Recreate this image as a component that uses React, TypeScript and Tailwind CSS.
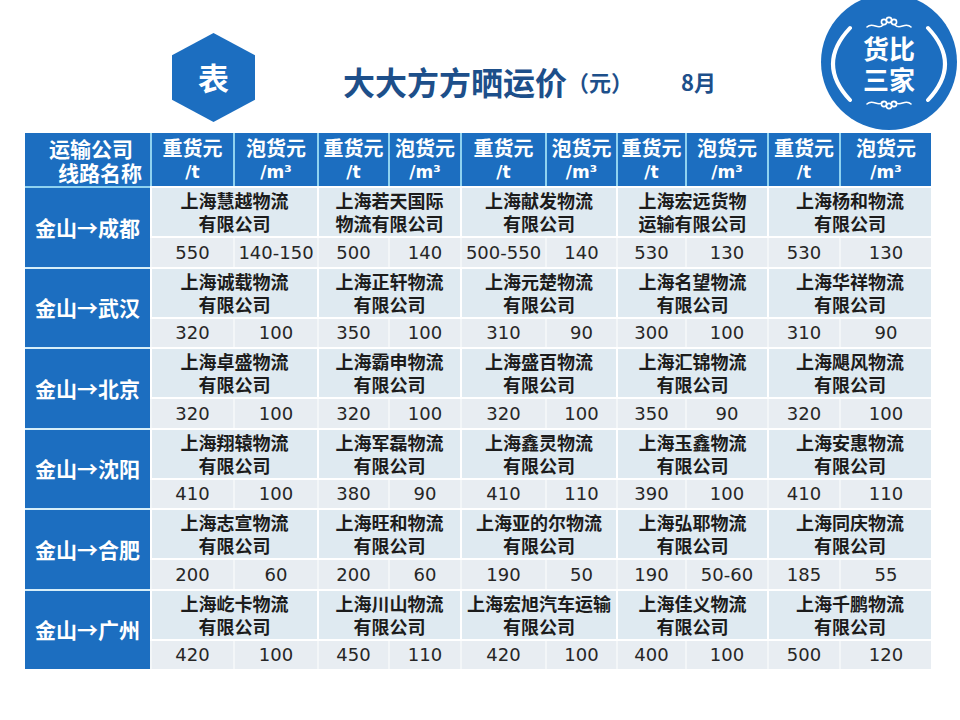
import React from "react";

const colWidths = [
  "w-[83px]",
  "w-[84px]",
  "w-[71px]",
  "w-[72px]",
  "w-[85px]",
  "w-[71px]",
  "w-[69px]",
  "w-[82px]",
  "w-[72px]",
  "w-[92px]",
];

const pairWidths = ["w-[167px]", "w-[143px]", "w-[156px]", "w-[151px]", "w-[164px]"];

const routes = [
  {
    name: "成都",
    companies: [
      ["上海慧越物流", "有限公司"],
      ["上海若天国际", "物流有限公司"],
      ["上海献发物流", "有限公司"],
      ["上海宏远货物", "运输有限公司"],
      ["上海杨和物流", "有限公司"],
    ],
    prices: ["550", "140-150", "500", "140", "500-550", "140", "530", "130", "530", "130"],
  },
  {
    name: "武汉",
    companies: [
      ["上海诚载物流", "有限公司"],
      ["上海正轩物流", "有限公司"],
      ["上海元楚物流", "有限公司"],
      ["上海名望物流", "有限公司"],
      ["上海华祥物流", "有限公司"],
    ],
    prices: ["320", "100", "350", "100", "310", "90", "300", "100", "310", "90"],
  },
  {
    name: "北京",
    companies: [
      ["上海卓盛物流", "有限公司"],
      ["上海霸申物流", "有限公司"],
      ["上海盛百物流", "有限公司"],
      ["上海汇锦物流", "有限公司"],
      ["上海飓风物流", "有限公司"],
    ],
    prices: ["320", "100", "320", "100", "320", "100", "350", "90", "320", "100"],
  },
  {
    name: "沈阳",
    companies: [
      ["上海翔辕物流", "有限公司"],
      ["上海军磊物流", "有限公司"],
      ["上海鑫灵物流", "有限公司"],
      ["上海玉鑫物流", "有限公司"],
      ["上海安惠物流", "有限公司"],
    ],
    prices: ["410", "100", "380", "90", "410", "110", "390", "100", "410", "110"],
  },
  {
    name: "合肥",
    companies: [
      ["上海志宣物流", "有限公司"],
      ["上海旺和物流", "有限公司"],
      ["上海亚的尔物流", "有限公司"],
      ["上海弘耶物流", "有限公司"],
      ["上海同庆物流", "有限公司"],
    ],
    prices: ["200", "60", "200", "60", "190", "50", "190", "50-60", "185", "55"],
  },
  {
    name: "广州",
    companies: [
      ["上海屹卡物流", "有限公司"],
      ["上海川山物流", "有限公司"],
      ["上海宏旭汽车运输", "有限公司"],
      ["上海佳义物流", "有限公司"],
      ["上海千鹏物流", "有限公司"],
    ],
    prices: ["420", "100", "450", "110", "420", "100", "400", "100", "500", "120"],
  },
];

function Hexagon() {
  return (
    <div className="relative ml-[172px] mt-[33px] h-[89px] w-[83px] shrink-0">
      <svg width="83" height="89" viewBox="0 0 83 89" className="block">
        <polygon points="41.5,0 83,22.25 83,66.75 41.5,89 0,66.75 0,22.25" fill="#1c6ec0" />
      </svg>
      <div className="absolute inset-0 flex items-center justify-center text-[31px] font-bold text-white">
        表
      </div>
    </div>
  );
}

function Badge() {
  return (
    <div className="relative ml-auto mr-[3px] h-[130px] w-[136px] shrink-0">
      <svg width="136" height="130" viewBox="0 0 136 130" className="block">
        <circle cx="68" cy="62" r="68" fill="#1c6ec0" />
        <g fill="none" stroke="#fff" strokeLinecap="round">
          <path d="M29 28 Q-5 64 29 100" strokeWidth="4" />
          <path d="M107 28 Q141 64 107 100" strokeWidth="4" />
          <g strokeWidth="1.6">
            <path d="M46 27 C52 21 57 31 62 25" />
            <path d="M74 25 C79 31 84 21 90 27" />
            <circle cx="63" cy="22" r="2.6" />
            <circle cx="68" cy="20" r="2.6" />
            <circle cx="73" cy="22" r="2.6" />
            <path d="M46 104 C52 98 57 108 62 102" />
            <path d="M74 102 C79 108 84 98 90 104" />
            <circle cx="63" cy="104" r="2.6" />
            <circle cx="68" cy="106" r="2.6" />
            <circle cx="73" cy="104" r="2.6" />
          </g>
        </g>
      </svg>
      <div className="absolute inset-0 flex flex-col items-center justify-center pb-[4px] text-[26px] font-bold leading-[31px] text-white">
        <span>货比</span>
        <span>三家</span>
      </div>
    </div>
  );
}

export default function App() {
  return (
    <div className="h-[720px] w-[960px] overflow-hidden bg-white font-['Noto_Sans_CJK_SC',sans-serif]">
      <div className="flex h-[133px]">
        <Hexagon />
        <div className="ml-[88px] mt-[62px] flex h-[38px] items-center text-[#1d4f8a]">
          <span className="text-[32px] font-bold leading-none">大大方方晒运价</span>
          <span className="text-[22px] font-bold leading-none">（元）</span>
          <span className="ml-[48px] text-[22px] font-bold leading-none">8月</span>
        </div>
        <Badge />
      </div>

      <div className="ml-[25px] w-[906px]">
        <div className="flex h-[53px] bg-[#1c6ec0] text-white font-bold">
          <div className="flex w-[125px] flex-col items-end justify-center text-[21px] leading-[24px]">
            <span className="pr-[17px]">运输公司</span>
            <span className="pr-[8px]">线路名称</span>
          </div>
          {colWidths.map((w, i) => (
            <div
              key={i}
              className={`${w} flex flex-col items-center justify-center border-l-2 border-[#8fd2f0] text-[20px] leading-[24px]`}
            >
              <span>{i % 2 === 0 ? "重货元" : "泡货元"}</span>
              <span className="font-['DejaVu_Sans',sans-serif] text-[17px]">
                {i % 2 === 0 ? "/t" : "/m³"}
              </span>
            </div>
          ))}
        </div>

        {routes.map((r, ri) => (
          <div key={r.name} className="flex h-[80.5px]">
            <div
              className={`flex w-[125px] items-center justify-center bg-[#1c6ec0] text-[21px] font-bold text-white ${
                ri === 0 ? "border-t-2 border-[#8fd2f0]" : "border-t-2 border-[#d6eef9]"
              }`}
            >
              金山→{r.name}
            </div>
            <div className="flex w-[781px] flex-col border-t-2 border-white">
              <div className="flex h-[48px] bg-[#dfeaf1]">
                {r.companies.map((c, ci) => (
                  <div
                    key={ci}
                    className={`${pairWidths[ci]} flex flex-col items-center justify-center border-l-2 border-white text-[18px] font-bold leading-[23px] text-[#1c1c1c]`}
                  >
                    <span>{c[0]}</span>
                    <span>{c[1]}</span>
                  </div>
                ))}
              </div>
              <div className="flex flex-1 border-t-2 border-white bg-[#e8edf2]">
                {r.prices.map((p, pi) => (
                  <div
                    key={pi}
                    className={`${colWidths[pi]} flex items-center justify-center border-l-2 border-[#f3f6f8] font-['DejaVu_Sans',sans-serif] text-[18px] text-[#262626]`}
                  >
                    {p}
                  </div>
                ))}
              </div>
            </div>
          </div>
        ))}
      </div>
    </div>
  );
}
